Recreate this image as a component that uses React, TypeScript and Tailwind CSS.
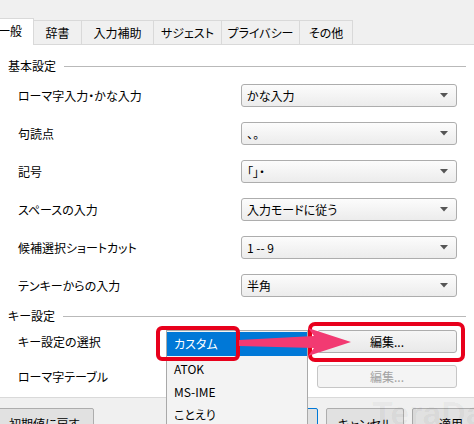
import React from "react";

const font = {
  fontFamily: '"Noto Sans CJK JP", "Noto Sans", sans-serif',
  fontFeatureSettings: '"palt"',
};

const tabs = [
  { name: "辞書", w: "w-[48px]" },
  { name: "入力補助", w: "w-[72px]" },
  { name: "サジェスト", w: "w-[68px]" },
  { name: "プライバシー", w: "w-[78px]" },
  { name: "その他", w: "w-[53px]" },
];

const basicRows = [
  { label: "ローマ字入力・かな入力", value: "かな入力" },
  { label: "句読点", value: "、。" },
  { label: "記号", value: "「」・" },
  { label: "スペースの入力", value: "入力モードに従う" },
  { label: "候補選択ショートカット", value: "1 -- 9" },
  { label: "テンキーからの入力", value: "半角" },
];

function Combo({ value }: { value: string }) {
  return (
    <div className="ml-auto flex h-[23px] w-[216px] items-center rounded-[3px] border border-[#adadad] bg-gradient-to-b from-[#fcfcfc] to-[#ececec] pl-[5px] pr-[8px] text-[12px] leading-none text-black">
      <span className="flex-1 whitespace-pre">{value}</span>
      <svg width="8" height="5" viewBox="0 0 8 5">
        <path d="M0 0 L8 0 L4 4.5 Z" fill="#555" />
      </svg>
    </div>
  );
}

function Heading({ text }: { text: string }) {
  return (
    <div className="flex h-[16px] items-center pl-[8px] pr-[8px]">
      <span className="text-[12px] leading-none text-black">{text}</span>
      <div className="ml-[8px] h-px flex-1 bg-[#b9b9b9]" />
    </div>
  );
}

export default function App() {
  return (
    <div
      className="relative h-[424px] w-[474px] overflow-hidden bg-[#f0f0f0] text-black"
      style={font}
    >
      {/* tab bar */}
      <div className="flex h-[44px] items-end -ml-[14px]">
        <div className="relative z-10 -mb-px flex h-[27px] w-[48px] items-center justify-center border border-b-0 border-[#d9d9d9] bg-white pb-[2px] text-[12px]">
          一般
        </div>
        {tabs.map((t) => (
          <div
            key={t.name}
            className={`flex h-[24px] ${t.w} items-center justify-center border-t border-r border-[#d9d9d9] bg-[#f0f0f0] text-[12px]`}
          >
            {t.name}
          </div>
        ))}
      </div>

      {/* panel */}
      <div className="h-[354px] border-t border-b border-[#d9d9d9] bg-white pt-[13px]">
        <Heading text="基本設定" />
        <div className="mt-[10px] flex flex-col gap-[15px] pl-[18px] pr-[17px]">
          {basicRows.map((r) => (
            <div key={r.label} className="flex h-[23px] items-center">
              <span className="text-[12px] leading-none">{r.label}</span>
              <Combo value={r.value} />
            </div>
          ))}
        </div>
        <div className="mt-[11px]">
          <Heading text="キー設定" />
        </div>
        <div className="mt-[6px] flex flex-col gap-[12px] pl-[18px] pr-[17px]">
          <div className="flex h-[23px] items-center">
            <span className="text-[12px] leading-none">キー設定の選択</span>
            <button className="ml-auto h-[23px] w-[140px] rounded-[3px] border border-[#adadad] bg-gradient-to-b from-[#f6f6f6] to-[#e9e9e9] text-[12px] leading-none">
              編集...
            </button>
          </div>
          <div className="flex h-[23px] items-center">
            <span className="text-[12px] leading-none">ローマ字テーブル</span>
            <button className="ml-auto h-[23px] w-[140px] rounded-[3px] border border-[#c6c6c6] bg-[#f4f4f4] text-[12px] leading-none text-[#a3a3a3]">
              編集...
            </button>
          </div>
        </div>
      </div>

      {/* bottom buttons */}
      <div className="flex pt-[10px]">
        <button className="-ml-[10px] flex h-[32px] w-[104px] items-center rounded-[2px] border border-[#adadad] bg-[#e1e1e1] pl-[18px] text-[12px] leading-none">
          初期値に戻す
        </button>
        <div className="ml-auto -mr-[16px] flex gap-[8px]">
          <button className="h-[32px] w-[78px] rounded-[2px] border border-[#0078d7] bg-[#e1e1e1] text-[12px] leading-none">
            OK
          </button>
          <button className="h-[32px] w-[78px] rounded-[2px] border border-[#adadad] bg-[#e1e1e1] text-[12px] leading-none">
            キャンセル
          </button>
          <button className="h-[32px] w-[78px] rounded-[2px] border border-[#adadad] bg-[#e1e1e1] text-[12px] leading-none">
            適用
          </button>
        </div>
      </div>

      {/* watermark */}
      <div
        className="pointer-events-none absolute left-[372px] top-[396px] text-[34px] font-bold leading-none text-[#000000]/[0.04]"
        style={{ fontFamily: '"Liberation Sans", sans-serif' }}
      >
        TeraDas
      </div>

      {/* open dropdown list */}
      <div className="absolute left-[166px] top-[330px] h-[100px] w-[142px] border border-[#a9a9a9] bg-[#f3f3f3] pt-px text-[12px] leading-none">
        <div className="flex h-[24px] items-center bg-[#0078d7] pl-[7px] text-white">
          カスタム
        </div>
        <div className="mt-[1px] flex h-[23px] items-center pl-[7px]">ATOK</div>
        <div className="flex h-[23px] items-center pl-[7px]">MS-IME</div>
        <div className="flex h-[23px] items-center pl-[7px]">ことえり</div>
      </div>

      {/* annotations */}
      <div className="absolute left-[156px] top-[326px] h-[35px] w-[84px] rounded-[6px] border-[4px] border-[#e8001c]" />
      <div className="absolute left-[308px] top-[322px] h-[40px] w-[157px] rounded-[7px] border-[4px] border-[#e8001c]" />
      <svg
        className="absolute left-0 top-0"
        width="474"
        height="424"
        viewBox="0 0 474 424"
      >
        <polygon
          points="239,340 314,336 308,328 351,342 308,356 314,348 239,346"
          fill="#f23a72"
        />
      </svg>
    </div>
  );
}
